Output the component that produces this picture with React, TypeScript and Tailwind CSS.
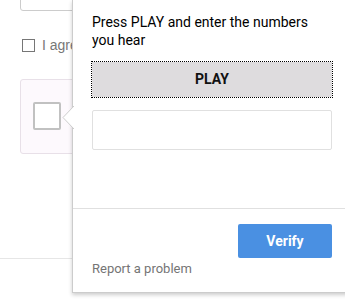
import React from "react";

function AudioChallenge() {
  return (
    <div className="absolute left-[72px] top-0 h-[293px] w-[290px] border-l border-b border-[#cccccc] bg-white shadow-[0_2px_4px_rgba(0,0,0,0.2)]">
      {/* arrow pointing back at the checkbox */}
      <svg
        className="absolute -left-[11px] top-[106px]"
        width="12"
        height="24"
        viewBox="0 0 12 24"
      >
        <polygon points="12,0 1,11.5 12,23" fill="#ffffff" />
        <polyline points="12,0 1,11.5 12,23" fill="none" stroke="#cccccc" strokeWidth="1" />
      </svg>

      <div className="flex h-[208px] flex-col pl-[19px] w-[259px]">
        <p className="mt-[13px] text-[14px] leading-[18px] text-[#000000]">
          Press PLAY and enter the numbers you hear
        </p>
        <button className="mt-[13px] h-[35px] w-[240px] bg-[#dedcde] text-[14px] font-bold text-[#111111] outline outline-1 outline-dotted outline-black">
          PLAY
        </button>
        <input
          type="text"
          className="mt-[13px] h-[40px] w-[240px] rounded-[2px] border border-[#e0e0e0] bg-white"
        />
      </div>
      <div className="h-px w-full bg-[#e0e0e0]" />

      <div className="flex w-[259px] flex-col pl-[19px]">
        <button className="mt-[15px] h-[34px] w-[94px] self-end rounded-[2px] bg-[#4a90e2] text-[14px] font-bold text-white">
          Verify
        </button>
        <a className="mt-[3px] text-[13px] leading-[16px] text-[#757575]">
          Report a problem
        </a>
      </div>
    </div>
  );
}

export default function App() {
  return (
    <div className="relative h-[301px] w-[345px] overflow-hidden bg-white font-['Roboto',sans-serif]">
      <div className="h-[288px] border-b border-[#e6e6e6] pl-[20px]">
        <div className="-mt-[29px] h-[40px] w-[300px] rounded-[3px] border border-[#cccccc]" />

        <label className="mt-[24px] flex h-[20px] w-[52px] items-center gap-[7px] overflow-hidden whitespace-nowrap pl-[2px]">
          <span className="h-[13px] w-[13px] shrink-0 border border-[#767676] bg-white" />
          <span className="font-['Liberation_Sans',sans-serif] text-[14px] text-[#777777]">
            I agree
          </span>
        </label>

        <div className="mt-[24px] flex h-[75px] w-[320px] items-start rounded-[3px] border border-[#e8e0e8] bg-[#fdf9fd] pl-[12px] pt-[22px]">
          <div className="h-[28px] w-[28px] rounded-[2px] border-2 border-[#c1c1c1] bg-white" />
        </div>
      </div>

      <AudioChallenge />
    </div>
  );
}
